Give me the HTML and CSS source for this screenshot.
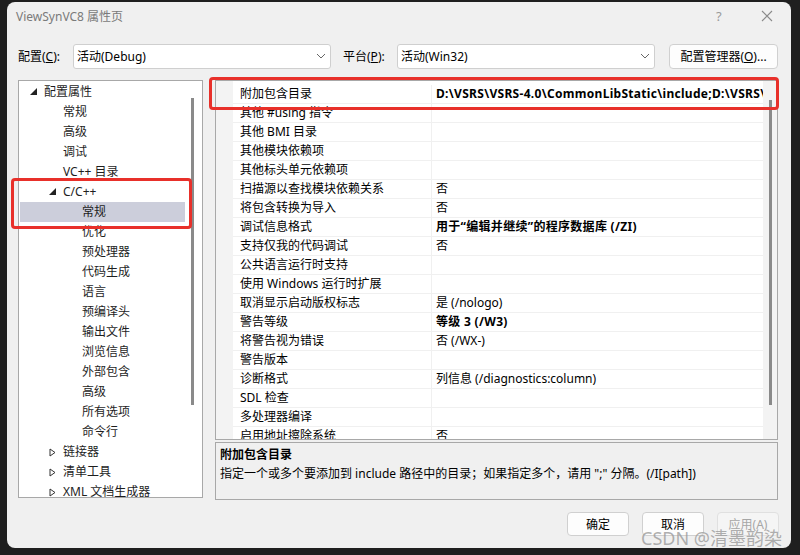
FILE: index.html
```html
<!DOCTYPE html>
<html lang="zh-CN">
	<head>
		<meta charset="utf-8">
		<title>ViewSynVC8 属性页</title>
		<link rel="stylesheet" href="styles.css">
	</head>
	<body>
		<div class="dialog">
			<div class="titlebar">
				<span class="title">ViewSynVC8 属性页</span>
				<span class="help">?</span>
				<span class="close">
					<svg width="12" height="12" viewBox="0 0 12 12"><path d="M1 1L11 11M11 1L1 11" stroke="#8a8a8a" stroke-width="1.1" fill="none"/></svg>
				</span>
			</div>

			<div class="config-row">
				<span class="label">配置(<u>C</u>):</span>
				<div class="select sel-config">
					<span>活动(Debug)</span>
					<svg width="10" height="6" viewBox="0 0 10 6"><path d="M1 1L5 5L9 1" stroke="#666" stroke-width="1" fill="none"/></svg>
				</div>
				<span class="label label-platform">平台(<u>P</u>):</span>
				<div class="select sel-platform">
					<span>活动(Win32)</span>
					<svg width="10" height="6" viewBox="0 0 10 6"><path d="M1 1L5 5L9 1" stroke="#666" stroke-width="1" fill="none"/></svg>
				</div>
				<button class="btn btn-manager">配置管理器(<u>O</u>)...</button>
			</div>

			<div class="main">
				<div class="tree">
					<div class="tree-items">
						<div class="node lv0"><svg class="tri" width="7" height="7" viewBox="0 0 7 7"><path d="M7 0L7 7L0 7Z" fill="#222"/></svg>配置属性</div>
						<div class="node lv1">常规</div>
						<div class="node lv1">高级</div>
						<div class="node lv1">调试</div>
						<div class="node lv1">VC++ 目录</div>
						<div class="node lv1"><svg class="tri" width="7" height="7" viewBox="0 0 7 7"><path d="M7 0L7 7L0 7Z" fill="#222"/></svg>C/C++</div>
						<div class="node lv2 selected">常规</div>
						<div class="node lv2">优化</div>
						<div class="node lv2">预处理器</div>
						<div class="node lv2">代码生成</div>
						<div class="node lv2">语言</div>
						<div class="node lv2">预编译头</div>
						<div class="node lv2">输出文件</div>
						<div class="node lv2">浏览信息</div>
						<div class="node lv2">外部包含</div>
						<div class="node lv2">高级</div>
						<div class="node lv2">所有选项</div>
						<div class="node lv2">命令行</div>
						<div class="node lv1"><svg class="tri" width="7" height="9" viewBox="0 0 7 9"><path d="M1 1L6 4.5L1 8Z" stroke="#333" stroke-width="1" fill="none"/></svg>链接器</div>
						<div class="node lv1"><svg class="tri" width="7" height="9" viewBox="0 0 7 9"><path d="M1 1L6 4.5L1 8Z" stroke="#333" stroke-width="1" fill="none"/></svg>清单工具</div>
						<div class="node lv1"><svg class="tri" width="7" height="9" viewBox="0 0 7 9"><path d="M1 1L6 4.5L1 8Z" stroke="#333" stroke-width="1" fill="none"/></svg>XML 文档生成器</div>
					</div>
					<div class="vscroll tree-scroll"><div class="thumb"></div></div>
				</div>

				<div class="right">
					<div class="grid">
						<div class="rows">
							<div class="row"><span class="gut"></span><span class="name">附加包含目录</span><span class="val bold">D:\VSRS\VSRS-4.0\CommonLibStatic\include;D:\VSRS\VSRS-4.0\ViewSyn\include</span></div>
							<div class="row"><span class="gut"></span><span class="name">其他 #using 指令</span><span class="val"></span></div>
							<div class="row"><span class="gut"></span><span class="name">其他 BMI 目录</span><span class="val"></span></div>
							<div class="row"><span class="gut"></span><span class="name">其他模块依赖项</span><span class="val"></span></div>
							<div class="row"><span class="gut"></span><span class="name">其他标头单元依赖项</span><span class="val"></span></div>
							<div class="row"><span class="gut"></span><span class="name">扫描源以查找模块依赖关系</span><span class="val">否</span></div>
							<div class="row"><span class="gut"></span><span class="name">将包含转换为导入</span><span class="val">否</span></div>
							<div class="row"><span class="gut"></span><span class="name">调试信息格式</span><span class="val bold">用于“编辑并继续”的程序数据库 (/ZI)</span></div>
							<div class="row"><span class="gut"></span><span class="name">支持仅我的代码调试</span><span class="val">否</span></div>
							<div class="row"><span class="gut"></span><span class="name">公共语言运行时支持</span><span class="val"></span></div>
							<div class="row"><span class="gut"></span><span class="name">使用 Windows 运行时扩展</span><span class="val"></span></div>
							<div class="row"><span class="gut"></span><span class="name">取消显示启动版权标志</span><span class="val">是 (/nologo)</span></div>
							<div class="row"><span class="gut"></span><span class="name">警告等级</span><span class="val bold">等级 3 (/W3)</span></div>
							<div class="row"><span class="gut"></span><span class="name">将警告视为错误</span><span class="val">否 (/WX-)</span></div>
							<div class="row"><span class="gut"></span><span class="name">警告版本</span><span class="val"></span></div>
							<div class="row"><span class="gut"></span><span class="name">诊断格式</span><span class="val">列信息 (/diagnostics:column)</span></div>
							<div class="row"><span class="gut"></span><span class="name">SDL 检查</span><span class="val"></span></div>
							<div class="row"><span class="gut"></span><span class="name">多处理器编译</span><span class="val"></span></div>
							<div class="row"><span class="gut"></span><span class="name">启用地址擦除系统</span><span class="val">否</span></div>
						</div>
						<div class="vscroll grid-scroll"><div class="thumb"></div></div>
					</div>
					<div class="desc">
						<div class="desc-title">附加包含目录</div>
						<div class="desc-text">指定一个或多个要添加到 include 路径中的目录；如果指定多个，请用 ";" 分隔。(/I[path])</div>
					</div>
				</div>
			</div>

			<div class="buttons">
				<button class="btn">确定</button>
				<button class="btn">取消</button>
				<button class="btn disabled">应用(A)</button>
			</div>

			<div class="mark mark-tree"></div>
			<div class="mark mark-row"></div>
			<div class="watermark">CSDN @清墨韵染</div>
		</div>
	</body>
</html>
```

FILE: styles.css
```css
* { box-sizing: border-box; }
body {
	margin: 0;
	background: #1f1f1f;
	font-family: "Noto Sans", "Noto Sans CJK SC", sans-serif;
	font-size: 12px;
	color: #000;
	height: 555px;
	overflow: hidden;
}

.dialog {
	position: relative;
	margin: 2px 0 0 7px;
	width: 784px;
	height: 546px;
	background: #f0f0f0;
	border-radius: 8px;
	padding: 0 13px 0 11px;
	display: flex;
	flex-direction: column;
}

/* title bar */
.titlebar {
	height: 28px;
	display: flex;
	align-items: center;
	margin-left: -2px;
}
.title { color: #7a7a7a; flex: 1; }
.help { color: #9a9a9a; width: 14px; margin-right: 31px; font-size: 13px; }
.close { display: flex; margin-right: 5px; }

/* configuration row */
.config-row {
	margin-top: 13px;
	height: 26px;
	display: flex;
	align-items: center;
}
.label { width: 55px; }
.label-platform { margin-left: 12px; width: 54px; }
.select {
	height: 25px;
	background: #fff;
	border: 1px solid #cfcfcf;
	border-radius: 3px;
	display: flex;
	align-items: center;
	justify-content: space-between;
	padding: 0 4px 0 3px;
}
.sel-config { width: 258px; }
.sel-platform { width: 258px; }
.btn {
	font: inherit;
	color: #000;
	background: #fdfdfd;
	border: 1px solid #d0d0d0;
	border-radius: 4px;
	height: 25px;
	padding: 0;
}
.btn-manager { margin-left: auto; width: 109px; }
.btn.disabled { background: #f5f5f5; color: #a6a6a6; border-color: #e0e0e0; }

/* main area */
.main {
	margin-top: 11px;
	height: 420px;
	display: flex;
	gap: 12px;
}

.tree {
	width: 185px;
	height: 418px;
	background: #fff;
	border: 1px solid #a8a8a8;
	display: flex;
	overflow: hidden;
	color: #1e1e1e;
}
.tree-items { flex: 1; padding-top: 1px; }
.node {
	height: 20px;
	line-height: 20px;
	white-space: nowrap;
	position: relative;
}
.node.lv0 { padding-left: 25px; }
.node.lv1 { padding-left: 44px; }
.node.lv2 { padding-left: 63px; }
.node .tri { position: absolute; top: 6px; margin-left: -14px; }
.node.selected { background: #cccedb; margin-left: 1px; padding-left: 62px; }

.vscroll { width: 17px; position: relative; }
.vscroll .thumb {
	position: absolute;
	left: 6px;
	width: 3px;
	background: #8a8a8a;
}
.tree-scroll .thumb { top: 17px; height: 307px; }

.right {
	flex: 1;
	display: flex;
	flex-direction: column;
	gap: 2px;
}
.grid {
	height: 360px;
	background: #fff;
	border: 1px solid #a8a8a8;
	display: flex;
	overflow: hidden;
}
.rows { flex: 1; padding-top: 4px; background: linear-gradient(to right, #f3f3f3 17px, #fff 17px); }
.row {
	display: grid;
	grid-template-columns: 17px 199px 1fr;
	height: 19px;
	line-height: 18px;
}
.row .gut { background: #f3f3f3; }
.row .name, .row .val {
	border-bottom: 1px solid #f0f0f0;
	white-space: nowrap;
	overflow: hidden;
}
.row .name { padding-left: 7px; border-right: 1px solid #f0f0f0; }
.row .val { padding-left: 4px; }
.bold { font-weight: bold; letter-spacing: 0.3px; }
.grid-scroll { width: 14px; background: #f3f3f3; }
.grid-scroll .thumb { left: 6px; top: 19px; height: 305px; }

.desc {
	height: 58px;
	border: 1px solid #a8a8a8;
	padding: 2px 4px;
	line-height: 19px;
}
.desc-title { font-weight: bold; }

/* bottom buttons */
.buttons {
	margin-top: 12px;
	display: flex;
	justify-content: flex-end;
	gap: 13px;
	margin-right: -1px;
}
.buttons .btn { width: 62px; height: 24px; }

/* annotations */
.mark {
	position: absolute;
	border: 3px solid #e8302a;
	border-radius: 4px;
}
.mark-tree { left: 4px; top: 176px; width: 181px; height: 51px; }
.mark-row { left: 202px; top: 75px; width: 570px; height: 33px; }

.watermark {
	position: absolute;
	left: 634px;
	top: 522px;
	font-size: 18px;
	color: rgba(150, 150, 150, 0.75);
	white-space: nowrap;
}
```
